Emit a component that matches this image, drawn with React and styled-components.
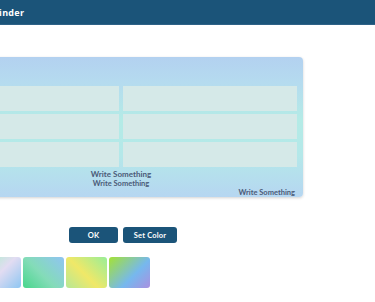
import styled, { createGlobalStyle } from "styled-components";

const GlobalStyle = createGlobalStyle`
  html, body {
    margin: 0;
    padding: 0;
    background: #ffffff;
    overflow: hidden;
  }
  body {
    font-family: "Open Sans", "Liberation Sans", sans-serif;
  }
`;

const TopBar = styled.header`
  height: 24px;
  background: #1b5479;
  border-bottom: 1px solid #2f6287;
  display: flex;
  align-items: center;
`;

const Title = styled.h1`
  margin: 0 0 0 -34px;
  font-size: 9px;
  font-weight: 700;
  letter-spacing: 0.3px;
  color: #ffffff;
  white-space: nowrap;
`;

const Page = styled.main`
  width: 364px;
  margin-left: -61px;
  padding-top: 32px;
`;

const Card = styled.section`
  width: 364px;
  height: 140px;
  border-radius: 4px;
  background: linear-gradient(
    to bottom,
    #b3d1f0 0%,
    #b5dbef 18%,
    #b4ebe6 45%,
    #b4e8e9 70%,
    #b6d6f1 100%
  );
  box-shadow: 0 1px 3px rgba(0, 0, 0, 0.18);
  display: flex;
  flex-direction: column;
`;

const CardHead = styled.div`
  height: 29px;
`;

const Grid = styled.div`
  display: grid;
  grid-template-columns: 174px 174px;
  grid-auto-rows: 25px;
  column-gap: 4px;
  row-gap: 3px;
  padding: 0 6px;
`;

const Cell = styled.div`
  background: #d5e9e8;
`;

const Caption = styled.p`
  margin: 0;
  color: #4b5b78;
  font-family: Lato, "Liberation Sans", sans-serif;
  font-weight: 700;
  font-size: ${({ $size }) => $size}px;
  line-height: ${({ $line }) => $line}px;
  text-align: ${({ $align }) => $align || "center"};
  padding-right: ${({ $align }) => ($align === "right" ? "8px" : "0")};
`;

const Captions = styled.div`
  padding-top: 3px;
`;

const Actions = styled.div`
  display: flex;
  justify-content: center;
  gap: 5px;
  margin-top: 30px;
  padding-left: 4px;
`;

const Button = styled.button`
  height: 16px;
  width: ${({ $w }) => $w}px;
  border: none;
  border-radius: 3px;
  background: #1b5479;
  color: #ffffff;
  font-family: Lato, "Liberation Sans", sans-serif;
  font-size: 7.5px;
  font-weight: 700;
  letter-spacing: 0.2px;
  padding: 0;
`;

const Swatches = styled.div`
  display: flex;
  gap: 2px;
  margin-top: 14px;
  padding-left: 41px;
`;

const Swatch = styled.div`
  width: 41px;
  height: 31px;
  border-radius: 3px;
  background: ${({ $bg }) => $bg};
`;

const swatches = [
  "linear-gradient(135deg, #a6f3c4 0%, #e2dcf2 50%, #8ec6f2 100%)",
  "linear-gradient(45deg, #48d68c 0%, #84dcb8 45%, #90c4f2 100%)",
  "linear-gradient(45deg, #b6e896 0%, #f0e868 45%, #98ee98 100%)",
  "linear-gradient(135deg, #a4e234 0%, #76b8ee 60%, #aa90e0 100%)",
];

export default function App() {
  return (
    <>
      <GlobalStyle />
      <TopBar>
        <Title>Color Finder</Title>
      </TopBar>
      <Page>
        <Card>
          <CardHead />
          <Grid>
            {Array.from({ length: 6 }).map((_, i) => (
              <Cell key={i} />
            ))}
          </Grid>
          <Captions>
            <Caption $size={8} $line={9}>Write Something</Caption>
            <Caption $size={7.5} $line={9}>Write Something</Caption>
            <Caption $size={7.5} $line={9} $align="right">Write Something</Caption>
          </Captions>
        </Card>
        <Actions>
          <Button $w={49}>OK</Button>
          <Button $w={54}>Set Color</Button>
        </Actions>
        <Swatches>
          {swatches.map((bg) => (
            <Swatch key={bg} $bg={bg} />
          ))}
        </Swatches>
      </Page>
    </>
  );
}
